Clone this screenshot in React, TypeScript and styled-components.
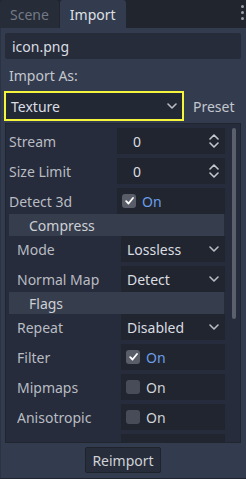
import React from 'react';
import styled, { createGlobalStyle } from 'styled-components';

const Global = createGlobalStyle`
  *, *::before, *::after {
    box-sizing: border-box;
  }
  html, body {
    margin: 0;
    padding: 0;
    background: #333b4f;
  }
  body {
    font-family: "Noto Sans", "DejaVu Sans", sans-serif;
    font-size: 14px;
    color: #c4c7cd;
  }
`;

const Dock = styled.div`
  width: 246px;
  height: 479px;
  display: flex;
  flex-direction: column;
  background: #20252e;
  overflow: hidden;
`;

const TabBar = styled.div`
  height: 28px;
  display: flex;
  align-items: stretch;
  position: relative;
`;

const Tab = styled.div<{ $active?: boolean }>`
  padding: 0 10px;
  display: flex;
  align-items: center;
  background: ${(p) => (p.$active ? '#333b4f' : '#262c38')};
  color: ${(p) => (p.$active ? '#dfe1e5' : '#747985')};
  border-radius: 3px 3px 0 0;
  margin-right: 1px;
`;

const Dots = styled.div`
  position: absolute;
  right: 2px;
  top: 5px;
  display: flex;
  flex-direction: column;
  gap: 3px;
  span {
    width: 3px;
    height: 3px;
    border-radius: 50%;
    background: #9a9ea7;
  }
`;

const Panel = styled.div`
  flex: 1;
  background: #333b4f;
  border-left: 1px solid #2b3242;
  border-bottom: 1px solid #20252e;
  display: flex;
  flex-direction: column;
  padding: 5px 5px 5px 4px;
  min-height: 0;
`;

const FileField = styled.div`
  height: 26px;
  background: #262c3a;
  border-radius: 2px;
  display: flex;
  align-items: center;
  padding-left: 7px;
  color: #dadde2;
`;

const Label = styled.div`
  height: 32px;
  display: flex;
  align-items: center;
  padding-left: 4px;
`;

const ImportRow = styled.div`
  display: flex;
  align-items: center;
  margin-left: -1px;
`;

const TypeSelect = styled.div`
  width: 180px;
  height: 30px;
  border: 2px solid #f5f53d;
  background: #232835;
  display: flex;
  align-items: center;
  justify-content: space-between;
  padding: 0 5px 0 5px;
  color: #dadde2;
`;

const Preset = styled.div`
  margin-left: 9px;
  color: #c4c7cd;
`;

const Inspector = styled.div`
  margin-top: 2px;
  flex: 1;
  min-height: 0;
  background: #262c3b;
  border: 1px solid #20252e;
  position: relative;
  overflow: hidden;
  padding: 4px 16px 0 3px;
`;

const ScrollGrab = styled.div`
  position: absolute;
  right: 4px;
  top: 4px;
  width: 4px;
  height: 191px;
  border-radius: 2px;
  background: #5b606c;
`;

const Row = styled.div<{ $indent?: boolean }>`
  display: grid;
  grid-template-columns: ${(p) => (p.$indent ? '104px 104px' : '108px 108px')};
  height: 26px;
  margin-bottom: 4px;
  align-items: stretch;
  padding-left: ${(p) => (p.$indent ? '8px' : '0')};
`;

const PropName = styled.div`
  display: flex;
  align-items: center;
  color: #b9bcc3;
  white-space: nowrap;
  overflow: hidden;
`;

const Value = styled.div<{ $start?: boolean }>`
  background: #21252f;
  display: flex;
  align-items: center;
  justify-content: ${(p) => (p.$start ? 'flex-start' : 'space-between')};
  padding: 0 6px 0 ${(p) => (p.$start ? '5px' : '6px')};
  color: #dadde2;
`;

const Number = styled.span`
  padding-left: 10px;
`;

const Section = styled.div`
  height: 22px;
  background: #363d4d;
  display: flex;
  align-items: center;
  padding-left: 20px;
  margin-top: -4px;
  color: #cdd0d5;
`;

const Check = styled.span<{ $on?: boolean }>`
  width: 14px;
  height: 14px;
  border-radius: 3px;
  background: ${(p) => (p.$on ? '#585d68' : '#474c58')};
  display: inline-flex;
  align-items: center;
  justify-content: center;
  margin-right: 6px;
`;

const CheckText = styled.span<{ $on?: boolean }>`
  color: ${(p) => (p.$on ? '#6b9ee8' : '#d0d3d8')};
`;

const Footer = styled.div`
  display: flex;
  justify-content: center;
  padding-top: 4px;
`;

const Button = styled.div`
  height: 26px;
  padding: 0 6px;
  background: #272d3b;
  border: 1px solid #1f232b;
  border-radius: 2px;
  display: flex;
  align-items: center;
  color: #cfd2d7;
`;

const Chevron = () => (
  <svg width="10" height="6" viewBox="0 0 10 6">
    <path d="M1 1l4 4 4-4" fill="none" stroke="#b9bcc3" strokeWidth="1.6" strokeLinecap="round" strokeLinejoin="round" />
  </svg>
);

const Spin = () => (
  <svg width="10" height="14" viewBox="0 0 10 14">
    <path d="M1 5l4-4 4 4M1 9l4 4 4-4" fill="none" stroke="#c4c7cd" strokeWidth="1.6" strokeLinecap="round" strokeLinejoin="round" />
  </svg>
);

const Tick = () => (
  <svg width="9" height="8" viewBox="0 0 9 8">
    <path d="M1.2 4.2l2.3 2.3 4.5-5.5" fill="none" stroke="#ffffff" strokeWidth="1.8" strokeLinecap="round" strokeLinejoin="round" />
  </svg>
);

type Prop =
  | { kind: 'spin'; name: string; value: string; indent?: boolean }
  | { kind: 'check'; name: string; on: boolean; indent?: boolean }
  | { kind: 'enum'; name: string; value: string; indent?: boolean }
  | { kind: 'section'; name: string };

const props: Prop[] = [
  { kind: 'spin', name: 'Stream', value: '0' },
  { kind: 'spin', name: 'Size Limit', value: '0' },
  { kind: 'check', name: 'Detect 3d', on: true },
  { kind: 'section', name: 'Compress' },
  { kind: 'enum', name: 'Mode', value: 'Lossless', indent: true },
  { kind: 'enum', name: 'Normal Map', value: 'Detect', indent: true },
  { kind: 'section', name: 'Flags' },
  { kind: 'enum', name: 'Repeat', value: 'Disabled', indent: true },
  { kind: 'check', name: 'Filter', on: true, indent: true },
  { kind: 'check', name: 'Mipmaps', on: false, indent: true },
  { kind: 'check', name: 'Anisotropic', on: false, indent: true },
  { kind: 'enum', name: 'Srgb', value: 'Detect', indent: true },
];

const PropRow = ({ p }: { p: Prop }) => {
  if (p.kind === 'section') return <Section>{p.name}</Section>;
  return (
    <Row $indent={p.indent}>
      <PropName>{p.name}</PropName>
      {p.kind === 'spin' && (
        <Value>
          <Number>{p.value}</Number>
          <Spin />
        </Value>
      )}
      {p.kind === 'enum' && (
        <Value>
          <span>{p.value}</span>
          <Chevron />
        </Value>
      )}
      {p.kind === 'check' && (
        <Value $start>
          <Check $on={p.on}>{p.on && <Tick />}</Check>
          <CheckText $on={p.on}>On</CheckText>
        </Value>
      )}
    </Row>
  );
};

export default function App() {
  return (
    <>
      <Global />
      <Dock>
        <TabBar>
          <Tab>Scene</Tab>
          <Tab $active>Import</Tab>
          <Dots>
            <span />
            <span />
            <span />
          </Dots>
        </TabBar>
        <Panel>
          <FileField>icon.png</FileField>
          <Label>Import As:</Label>
          <ImportRow>
            <TypeSelect>
              <span>Texture</span>
              <Chevron />
            </TypeSelect>
            <Preset>Preset</Preset>
          </ImportRow>
          <Inspector>
            {props.map((p) => (
              <PropRow key={p.name} p={p} />
            ))}
            <ScrollGrab />
          </Inspector>
          <Footer>
            <Button>Reimport</Button>
          </Footer>
        </Panel>
      </Dock>
    </>
  );
}
